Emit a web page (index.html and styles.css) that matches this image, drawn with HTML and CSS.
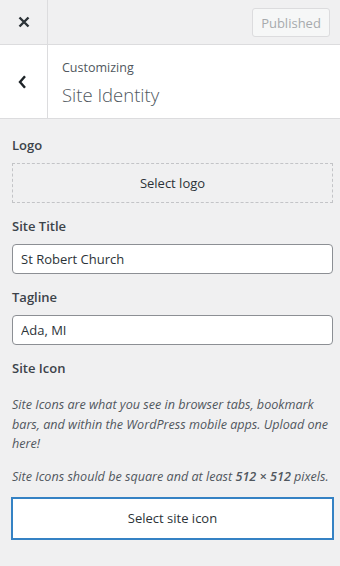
FILE: index.html
```html
<!DOCTYPE html>
<html lang="en">
<head>
<meta charset="utf-8">
<title>Site Identity</title>
<link rel="stylesheet" href="styles.css">
</head>
<body>
<div class="panel">
  <div class="topbar">
    <button class="close" aria-label="Close">
      <svg width="12" height="12" viewBox="0 0 12 12"><path d="M1.5 1.5 L10.5 10.5 M10.5 1.5 L1.5 10.5" stroke="#2c3338" stroke-width="2.4" stroke-linecap="butt"/></svg>
    </button>
    <div class="actions">
      <button class="published" disabled>Published</button>
    </div>
  </div>
  <div class="section-head">
    <button class="back" aria-label="Back">
      <svg width="9" height="14" viewBox="0 0 9 14"><path d="M7 1.2 L2 7 L7 12.8" fill="none" stroke="#1d2327" stroke-width="2.4"/></svg>
    </button>
    <div class="titles">
      <div class="crumb">Customizing</div>
      <h2 class="title">Site Identity</h2>
    </div>
  </div>
  <div class="content">
    <div class="control">
      <div class="label">Logo</div>
      <button class="dashed">Select logo</button>
    </div>
    <div class="control">
      <div class="label">Site Title</div>
      <input class="field" type="text" value="St Robert Church">
    </div>
    <div class="control">
      <div class="label">Tagline</div>
      <input class="field" type="text" value="Ada, MI">
    </div>
    <div class="control">
      <div class="label">Site Icon</div>
      <p class="desc first">Site Icons are what you see in browser tabs, bookmark bars, and within the WordPress mobile apps. Upload one here!</p>
      <p class="desc last">Site Icons should be square and at least <strong>512 × 512</strong> pixels.</p>
      <button class="select-icon">Select site icon</button>
    </div>
  </div>
</div>
</body>
</html>
```
FILE: styles.css
```css
* { box-sizing: border-box; }
html, body { margin: 0; padding: 0; }
body {
  width: 340px;
  height: 566px;
  background: #f0f0f1;
  font-family: "Open Sans", "Noto Sans", sans-serif;
  color: #3c434a;
  overflow: hidden;
}
button { font-family: inherit; }
.panel { width: 340px; }

.topbar {
  display: flex;
  height: 45px;
  border-bottom: 1px solid #dcdcde;
  background: #f0f0f1;
}
.close {
  width: 48px;
  height: 44px;
  border: 0;
  border-right: 1px solid #dcdcde;
  background: transparent;
  display: flex;
  align-items: center;
  justify-content: center;
  padding: 0;
}
.actions {
  flex: 1;
  display: flex;
  justify-content: flex-end;
  align-items: center;
  padding-right: 10px;
}
.published {
  width: 78px;
  height: 29px;
  margin-top: 1px;
  border: 1px solid #dcdcde;
  border-radius: 3px;
  background: #f6f7f7;
  color: #a7aaad;
  font-size: 13px;
  padding: 0;
}

.section-head {
  display: flex;
  height: 74px;
  background: #fff;
  border-bottom: 1px solid #dcdcde;
}
.back {
  width: 48px;
  height: 73px;
  border: 0;
  border-right: 1px solid #dcdcde;
  background: transparent;
  display: flex;
  align-items: center;
  justify-content: center;
  padding: 0 2px 0 0;
}
.titles {
  padding: 13px 0 0 14px;
}
.crumb {
  font-size: 12.5px;
  line-height: 20px;
  color: #50575e;
}
.title {
  margin: 3px 0 0;
  font-size: 18.5px;
  line-height: 27px;
  font-weight: 300;
  color: #50575e;
}

.content {
  padding: 16px 7px 0 12px;
  display: flex;
  flex-direction: column;
  gap: 13px;
}
.label {
  font-size: 13px;
  line-height: 21px;
  font-weight: 600;
  color: #3c434a;
  margin-bottom: 7px;
}
.dashed {
  display: block;
  width: 100%;
  height: 40px;
  border: 1px dashed #c3c4c7;
  background: transparent;
  color: #2c3338;
  font-size: 13px;
  padding: 0;
}
.field {
  display: block;
  width: 100%;
  height: 30px;
  border: 1px solid #8c8f94;
  border-radius: 4px;
  background: #fff;
  padding: 0 8px;
  font-family: inherit;
  font-size: 13px;
  color: #2c3338;
}
.desc {
  margin: 0 0 13.5px;
  font-size: 12.6px;
  line-height: 19.5px;
  font-style: italic;
  color: #50575e;
}
.desc.first { margin-top: 16px; }
.desc.last { margin-bottom: 0; }
.desc strong { font-weight: 600; }
.select-icon {
  display: block;
  width: 323px;
  height: 43px;
  margin-left: -1px;
  margin-top: 10px;
  border: 2px solid #3582c4;
  background: #fff;
  color: #2c3338;
  font-size: 13px;
  padding: 0;
}
```
